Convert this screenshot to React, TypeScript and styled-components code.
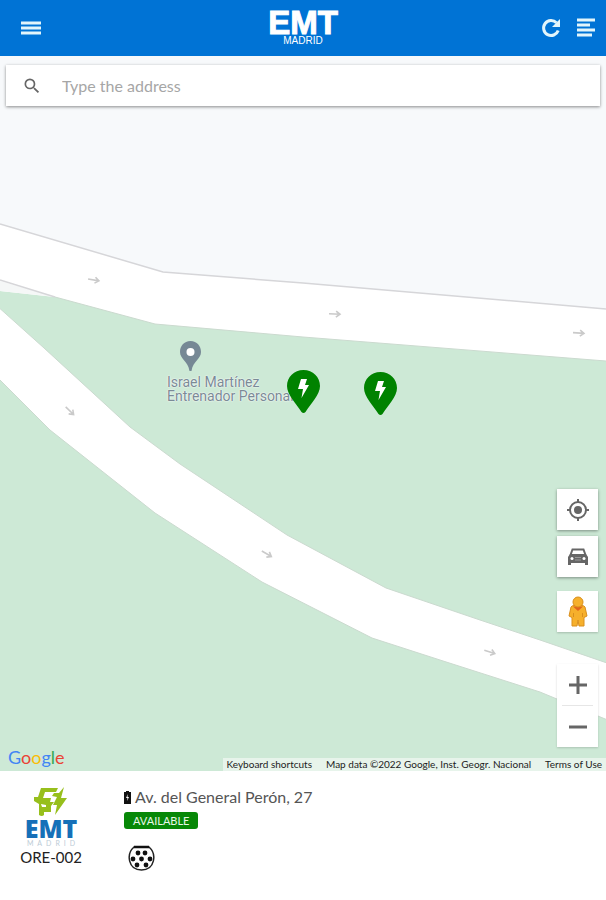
import React from 'react';
import styled, { createGlobalStyle } from 'styled-components';
import { MdSearch } from 'react-icons/md';

const GlobalStyle = createGlobalStyle`
  *, *::before, *::after { box-sizing: border-box; }
  body { margin: 0; background: #fff; font-family: Lato, "Liberation Sans", sans-serif; }
  button, input { font: inherit; }
`;

const Page = styled.div`
  display: flex;
  flex-direction: column;
  min-height: 100vh;
`;

const Header = styled.header`
  display: grid;
  grid-template-columns: 1fr auto 1fr;
  align-items: center;
  height: 56px;
  padding: 0 8px;
  background: #0073d5;
  color: #e2f5fb;
`;

const HeaderActions = styled.div`
  display: flex;
  justify-content: flex-end;
  gap: 10px;
`;

const IconButton = styled.button<{ $wide?: boolean }>`
  display: flex;
  align-items: center;
  justify-content: center;
  justify-self: start;
  width: ${(p) => (p.$wide ? 45 : 25)}px;
  height: 32px;
  padding: 0;
  border: 0;
  background: none;
  color: inherit;
  cursor: pointer;
`;

const Brand = styled.div`
  display: flex;
  flex-direction: column;
  align-items: center;
  color: #fff;
  font-family: "Liberation Sans", Arial, sans-serif;
`;

const BrandName = styled.span`
  font-size: 33px;
  font-weight: 700;
  line-height: 26px;
  -webkit-text-stroke: 1px #fff;
`;

const BrandCity = styled.span`
  font-size: 10px;
  line-height: 10px;
`;

const MapArea = styled.main`
  position: relative;
  display: flex;
  flex: 1;
  flex-direction: column;
  justify-content: space-between;
  overflow: hidden;
  background: #cde9d6;
`;

const MapCanvas = styled.svg`
  position: absolute;
  inset: 0;
  width: 100%;
  height: 100%;
`;

const SearchBar = styled.form`
  position: relative;
  display: flex;
  align-items: center;
  gap: 20px;
  height: 41px;
  margin: 9px 6px 0;
  padding: 0 16px;
  background: #fff;
  box-shadow: 0 1px 3px rgba(0, 0, 0, 0.45);
  color: #666;
`;

const SearchInput = styled.input`
  flex: 1;
  min-width: 0;
  padding: 0;
  border: 0;
  outline: 0;
  background: none;
  color: #444;
  font-size: 16px;
  &::placeholder { color: #a6a6a6; opacity: 1; }
`;

const Pin = styled.button<{ $x: number; $y: number }>`
  position: absolute;
  left: ${(p) => p.$x}px;
  top: ${(p) => p.$y}px;
  display: block;
  padding: 0;
  border: 0;
  background: none;
  cursor: pointer;
  svg { display: block; }
`;

const Place = styled.div`
  position: absolute;
  left: 167px;
  top: 285px;
  color: #7b8a96;
  font-family: Roboto, sans-serif;
  font-size: 14px;
  line-height: 14px;
  white-space: nowrap;
  text-shadow: 0 0 2px #fff, 0 0 1px #fff;
  svg { display: block; margin: 0 0 3px 12px; }
`;

const MapFooter = styled.div`
  position: relative;
  display: flex;
  flex-direction: column;
`;

const Controls = styled.div`
  display: flex;
  flex-direction: column;
  align-self: flex-end;
  gap: 6px;
  margin-right: 8px;
`;

const ControlButton = styled.button`
  display: flex;
  align-items: center;
  justify-content: center;
  width: 41px;
  height: 41px;
  padding: 0;
  border: 0;
  background: #fff;
  box-shadow: 0 1px 3px rgba(0, 0, 0, 0.4);
  color: #666;
  cursor: pointer;
`;

const StreetView = styled(ControlButton)`
  margin: 8px 0 26px;
  box-shadow: 0 1px 2px rgba(0, 0, 0, 0.2);
`;

const ZoomGroup = styled.div`
  background: #fff;
  box-shadow: 0 1px 2px rgba(0, 0, 0, 0.16);
`;

const ZoomButton = styled(ControlButton)`
  background: none;
  box-shadow: none;
`;

const Divider = styled.div`
  height: 1px;
  margin: 0 5px;
  background: #e6e6e6;
`;

const Credits = styled.div`
  display: flex;
  align-items: flex-end;
  justify-content: space-between;
  height: 24px;
`;

const GoogleLogo = styled.a`
  padding: 0 0 2px 8px;
  font-size: 18px;
  line-height: 24px;
  text-decoration: none;
`;

const Letter = styled.span<{ $color: string }>`
  color: ${(p) => p.$color};
`;

const Legal = styled.div`
  display: flex;
  gap: 14px;
  padding: 0 4px;
  background: #e7f4eb;
  color: #222;
  font-size: 10px;
  line-height: 13px;
  white-space: nowrap;
`;

const LegalLink = styled.a`
  color: inherit;
  text-decoration: none;
`;

const LegalButton = styled.button`
  padding: 0;
  border: 0;
  background: none;
  color: inherit;
  cursor: pointer;
`;

const Station = styled.section`
  display: flex;
  gap: 32px;
  min-height: 129px;
  padding: 16px 10px 24px;
  background: #fff;
`;

const Operator = styled.div`
  display: flex;
  flex-direction: column;
  align-items: center;
  width: 82px;
`;

const OperatorName = styled.span`
  color: #1670b8;
  font-family: "Open Sans", sans-serif;
  font-size: 25px;
  font-weight: 800;
  line-height: 22px;
`;

const OperatorCity = styled.span`
  padding-left: 4px;
  color: #bccbd6;
  font-size: 7px;
  line-height: 8px;
  letter-spacing: 4px;
`;

const StationId = styled.span`
  color: #222;
  font-size: 15px;
  line-height: 20px;
`;

const Details = styled.div`
  display: flex;
  flex-direction: column;
  align-items: flex-start;
`;

const Address = styled.h1`
  display: flex;
  align-items: center;
  gap: 4px;
  margin: 0;
  color: #555;
  font-size: 16px;
  font-weight: 400;
  line-height: 20px;
`;

const Badge = styled.span`
  margin: 5px 0 16px;
  padding: 0 9px;
  border-radius: 3px;
  background: #078807;
  color: #e7f8e7;
  font-size: 11px;
  line-height: 17px;
`;

const ConnectorIcon = styled.svg`
  display: block;
  margin-left: 4px;
`;

const arrows = [
  { x: 94, y: 280, angle: 10 },
  { x: 335, y: 314, angle: 3 },
  { x: 579, y: 333, angle: 4 },
  { x: 70, y: 411, angle: 44 },
  { x: 267, y: 554, angle: 30 },
  { x: 490, y: 652, angle: 18 },
];

const chargers = [
  { x: 287, y: 314 },
  { x: 364, y: 316 },
];

const googleLetters = [
  ['G', '#4285f4'],
  ['o', '#ea4335'],
  ['o', '#fbbc05'],
  ['g', '#4285f4'],
  ['l', '#34a853'],
  ['e', '#ea4335'],
];

function Streets() {
  return (
    <MapCanvas viewBox="0 56 606 715" preserveAspectRatio="xMinYMin slice" aria-hidden="true">
      <path d="M0 56H606V309L303 283 163 272 0 224Z" fill="#f7f9fb" />
      <path d="M0 224 163 272 303 283 606 309V361L303 337 155 324 55 297 0 291Z" fill="#fff" />
      <path d="M0 281 55 297 0 291Z" fill="#f5f7f7" />
      <path d="M0 224 163 272 303 283 606 309M0 280 55 297" fill="none" stroke="#d6d6d9" strokeWidth="1.5" />
      <path d="M55 297 155 324 303 337 606 361" fill="none" stroke="#cbdacf" />
      <path
        d="M-4 305 44 348 130 427 180 464 287 535 386 588 480 620 540 640 610 664V721L540 692 440 660 372 638 262 582 155 513 50 430 -4 376Z"
        fill="#fff"
        stroke="#cbdacf"
      />
      {arrows.map((a) => (
        <path
          key={a.x}
          d="M-6 0H5M1 -3 5 0 1 3"
          transform={`translate(${a.x} ${a.y}) rotate(${a.angle})`}
          fill="none"
          stroke="#cacaca"
          strokeWidth="1.6"
        />
      ))}
    </MapCanvas>
  );
}

function Charger() {
  return (
    <svg width="33" height="43" viewBox="0 0 33 43">
      <path d="M16.500 0C7 0 0 7 0 16C0 25 9 33 14.500 42Q16.500 44 18.500 42C24 33 33 25 33 16C33 7 26 0 16.500 0Z" fill="#008200" />
      <path d="M14 9H20L18 15H22L14.500 28 16 19H11Z" fill="#fff" />
    </svg>
  );
}

function MenuIcon() {
  return (
    <svg width="20" height="14" viewBox="0 0 20 14" stroke="currentColor" strokeWidth="3">
      <path d="M0 2H20M0 7H20M0 12H20" />
    </svg>
  );
}

function RefreshIcon() {
  return (
    <svg width="20" height="20" viewBox="0 0 20 20">
      <path d="M15.500 4.800A7.500 7.500 0 1 0 17.200 12.500" fill="none" stroke="currentColor" strokeWidth="3" />
      <path d="M19 1V9H11Z" fill="currentColor" />
    </svg>
  );
}

function LocateIcon() {
  return (
    <svg width="24" height="24" viewBox="0 0 24 24" fill="none" stroke="currentColor" strokeWidth="2">
      <circle cx="12" cy="12" r="8" />
      <circle cx="12" cy="12" r="4" fill="currentColor" stroke="none" />
      <path d="M12 1V4M12 20V23M1 12H4M20 12H23" />
    </svg>
  );
}

function CarIcon() {
  return (
    <svg width="22" height="20" viewBox="0 0 22 20">
      <path d="M3.500 8 5.500 2.500H16.500L18.500 8" fill="none" stroke="currentColor" strokeWidth="2" />
      <path d="M3 7H19L21 10V18H18V16H4V18H1V10Z" fill="currentColor" />
      <circle cx="5" cy="11.500" r="1.500" fill="#fff" />
      <circle cx="17" cy="11.500" r="1.500" fill="#fff" />
      <path d="M8 10.500H14M8 13H14" stroke="#999" />
    </svg>
  );
}

function Pegman() {
  return (
    <svg width="20" height="32" viewBox="0 0 20 32">
      <path d="M3 11Q4 9.500 6 9.500H14Q16 9.500 17 11L19 20 16 21.500V30H11L10 24 9 30H4V21.500L1 20Z" fill="#f6b02c" stroke="#d98f1d" />
      <path d="M5 10.500H15L10 15Z" fill="#e2641c" />
      <circle cx="10" cy="6" r="5" fill="#f6b02c" stroke="#d98f1d" />
      <path d="M5.500 17V21M14.500 17V21" stroke="#d98f1d" />
    </svg>
  );
}

function EvLogo() {
  return (
    <svg width="34" height="30" viewBox="0 0 34 30">
      <path
        d="M7 1H24L22 5H11L9 11H17L16 15 20 15 17 19V25H10V28Q8 30 5 28V17L0 14V10H4Z"
        fill="#97bf1c"
      />
      <path d="M30 0 27 11H33L21 28 23 18H19L23 10 18 9 20 6H25Z" fill="#97bf1c" />
      <path d="M7 17 12 18V20H8Z" fill="#fff" />
    </svg>
  );
}

function Connector() {
  const pins = [
    [10, 8], [17, 8], [5, 14], [13.500, 14], [22, 14], [9, 20], [18, 20],
  ];
  return (
    <ConnectorIcon width="27" height="26" viewBox="0 0 27 26" role="img" aria-label="Type 2 connector">
      <path d="M6 2H21C29 9 27 25 13.500 25C0 25 -2 9 6 2Z" fill="#fff" stroke="#222" strokeWidth="1.500" />
      <path d="M6 2H21" stroke="#111" strokeWidth="2.500" />
      {pins.map(([x, y]) => (
        <circle key={`${x}-${y}`} cx={x} cy={y} r="2.400" fill="#111" />
      ))}
    </ConnectorIcon>
  );
}

export default function App() {
  return (
    <>
      <GlobalStyle />
      <Page>
        <Header>
          <IconButton $wide aria-label="Menu"><MenuIcon /></IconButton>
          <Brand>
            <BrandName>EMT</BrandName>
            <BrandCity>MADRID</BrandCity>
          </Brand>
          <HeaderActions>
            <IconButton aria-label="Refresh"><RefreshIcon /></IconButton>
            <IconButton aria-label="List">
              <svg width="18" height="20" viewBox="0 0 18 20" stroke="currentColor" strokeWidth="3">
                <path d="M0 2H18M0 7H13M0 12H18M0 17H15" />
              </svg>
            </IconButton>
          </HeaderActions>
        </Header>

        <MapArea>
          <Streets />
          <Place>
            <svg width="23" height="31" viewBox="0 0 23 31">
              <path d="M11.500 0C5 0 1 5 1 11C1 18 9 20 10.500 30H12.500C14 20 22 18 22 11C22 5 18 0 11.500 0Z" fill="#768895" />
              <circle cx="11.500" cy="11" r="4" fill="#fff" />
            </svg>
            Israel Martínez<br />Entrenador Personal
          </Place>
          {chargers.map((c) => (
            <Pin key={c.x} $x={c.x} $y={c.y} aria-label="Charging station"><Charger /></Pin>
          ))}
          <SearchBar role="search">
            <MdSearch size={20} />
            <SearchInput type="text" placeholder="Type the address" aria-label="Type the address" />
          </SearchBar>

          <MapFooter>
            <Controls>
              <ControlButton aria-label="My location"><LocateIcon /></ControlButton>
              <ControlButton aria-label="Traffic"><CarIcon /></ControlButton>
              <StreetView aria-label="Street View"><Pegman /></StreetView>
              <ZoomGroup>
                <ZoomButton aria-label="Zoom in">
                  <svg width="18" height="18" viewBox="0 0 18 18" stroke="currentColor" strokeWidth="3">
                    <path d="M0 9H18M9 0V18" />
                  </svg>
                </ZoomButton>
                <Divider />
                <ZoomButton aria-label="Zoom out">
                  <svg width="18" height="18" viewBox="0 0 18 18" stroke="currentColor" strokeWidth="3">
                    <path d="M0 9H18" />
                  </svg>
                </ZoomButton>
              </ZoomGroup>
            </Controls>
            <Credits>
              <GoogleLogo href="#google" aria-label="Google">
                {googleLetters.map(([letter, color], i) => (
                  <Letter key={i} $color={color}>{letter}</Letter>
                ))}
              </GoogleLogo>
              <Legal>
                <LegalButton type="button">Keyboard shortcuts</LegalButton>
                <span>Map data ©2022 Google, Inst. Geogr. Nacional</span>
                <LegalLink href="#terms">Terms of Use</LegalLink>
              </Legal>
            </Credits>
          </MapFooter>
        </MapArea>

        <Station>
          <Operator>
            <EvLogo />
            <OperatorName>EMT</OperatorName>
            <OperatorCity>MADRID</OperatorCity>
            <StationId>ORE-002</StationId>
          </Operator>
          <Details>
            <Address>
              <svg width="7" height="13" viewBox="0 0 7 13" aria-hidden="true">
                <path d="M2 0H5V1H7V13H0V1H2Z" fill="#111" />
                <path d="M4 3 2 7H3.500L3 10 5 6H3.500Z" fill="#fff" />
              </svg>
              Av. del General Perón, 27
            </Address>
            <Badge>AVAILABLE</Badge>
            <Connector />
          </Details>
        </Station>
      </Page>
    </>
  );
}
